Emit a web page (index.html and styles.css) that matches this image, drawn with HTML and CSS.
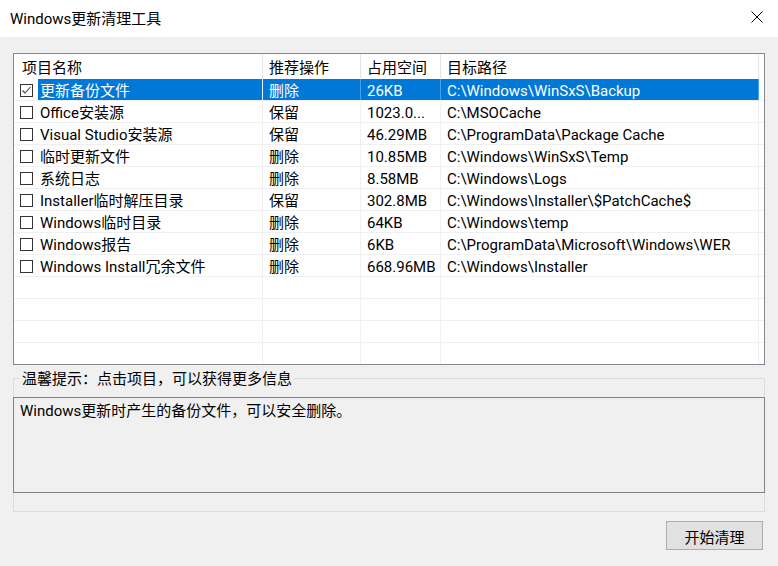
FILE: index.html
```html
<!DOCTYPE html>
<html lang="zh-CN">
<head>
    <meta charset="UTF-8">
    <title>Windows更新清理工具</title>
    <link rel="stylesheet" href="styles.css">
</head>
<body>
    <div class="titlebar">
        <span class="title">Windows更新清理工具</span>
        <svg class="close" width="12" height="12" viewBox="0 0 12 12"><path d="M0.5 0.5L11.5 11.5M11.5 0.5L0.5 11.5" stroke="#000" stroke-width="1" fill="none"/></svg>
    </div>
    <div class="client">
        <div class="listview">
            <div class="row head">
                <div class="cell c1">项目名称</div>
                <div class="cell c2">推荐操作</div>
                <div class="cell c3">占用空间</div>
                <div class="cell c4">目标路径</div>
            </div>
            <div class="row selected">
                <div class="cell c1"><span class="check on"><svg width="11" height="11" viewBox="0 0 11 11"><path d="M1.5 5.5L4 8L9.5 2" stroke="#444" stroke-width="1.1" fill="none"/></svg></span><span class="label">更新备份文件</span></div>
                <div class="cell c2">删除</div>
                <div class="cell c3">26KB</div>
                <div class="cell c4">C:\Windows\WinSxS\Backup</div>
            </div>
            <div class="row">
                <div class="cell c1"><span class="check"></span><span class="label">Office安装源</span></div>
                <div class="cell c2">保留</div>
                <div class="cell c3">1023.0...</div>
                <div class="cell c4">C:\MSOCache</div>
            </div>
            <div class="row">
                <div class="cell c1"><span class="check"></span><span class="label">Visual Studio安装源</span></div>
                <div class="cell c2">保留</div>
                <div class="cell c3">46.29MB</div>
                <div class="cell c4">C:\ProgramData\Package Cache</div>
            </div>
            <div class="row">
                <div class="cell c1"><span class="check"></span><span class="label">临时更新文件</span></div>
                <div class="cell c2">删除</div>
                <div class="cell c3">10.85MB</div>
                <div class="cell c4">C:\Windows\WinSxS\Temp</div>
            </div>
            <div class="row">
                <div class="cell c1"><span class="check"></span><span class="label">系统日志</span></div>
                <div class="cell c2">删除</div>
                <div class="cell c3">8.58MB</div>
                <div class="cell c4">C:\Windows\Logs</div>
            </div>
            <div class="row">
                <div class="cell c1"><span class="check"></span><span class="label">Installer临时解压目录</span></div>
                <div class="cell c2">保留</div>
                <div class="cell c3">302.8MB</div>
                <div class="cell c4">C:\Windows\Installer\$PatchCache$</div>
            </div>
            <div class="row">
                <div class="cell c1"><span class="check"></span><span class="label">Windows临时目录</span></div>
                <div class="cell c2">删除</div>
                <div class="cell c3">64KB</div>
                <div class="cell c4">C:\Windows\temp</div>
            </div>
            <div class="row">
                <div class="cell c1"><span class="check"></span><span class="label">Windows报告</span></div>
                <div class="cell c2">删除</div>
                <div class="cell c3">6KB</div>
                <div class="cell c4">C:\ProgramData\Microsoft\Windows\WER</div>
            </div>
            <div class="row">
                <div class="cell c1"><span class="check"></span><span class="label">Windows Install冗余文件</span></div>
                <div class="cell c2">删除</div>
                <div class="cell c3">668.96MB</div>
                <div class="cell c4">C:\Windows\Installer</div>
            </div>
            <div class="row empty"><div class="cell c1"></div><div class="cell c2"></div><div class="cell c3"></div><div class="cell c4"></div></div>
            <div class="row empty"><div class="cell c1"></div><div class="cell c2"></div><div class="cell c3"></div><div class="cell c4"></div></div>
            <div class="row empty"><div class="cell c1"></div><div class="cell c2"></div><div class="cell c3"></div><div class="cell c4"></div></div>
            <div class="row empty"><div class="cell c1"></div><div class="cell c2"></div><div class="cell c3"></div><div class="cell c4"></div></div>
        </div>
        <fieldset class="groupbox">
            <legend><span>温馨提示：点击项目，可以获得更多信息</span></legend>
            <div class="memo">Windows更新时产生的备份文件，可以安全删除。</div>
        </fieldset>
        <div class="footer">
            <button class="btn">开始清理</button>
        </div>
    </div>
</body>
</html>
```

FILE: styles.css
```css
html, body { margin: 0; height: 100%; }
body { background: #f0f0f0; font-family: Roboto, "Noto Sans CJK SC", sans-serif; font-size: 15px; color: #000; overflow: hidden; }

/* title bar */
.titlebar { height: 37px; background: #fff; display: flex; align-items: center; justify-content: space-between; padding: 0 15px 0 10px; box-sizing: border-box; }
.title { font-size: 15px; line-height: 20px; }
.close { margin-top: -3px; }

.client { padding: 16px 13px 0 13px; }

/* list view */
.listview { height: 312px; box-sizing: border-box; border: 1px solid #828790; background: #fff; overflow: hidden; }
.row { display: flex; height: 22px; border-bottom: 1px solid #f0f0f0; box-sizing: border-box; }
.row.head { height: 25px; border-bottom: none; }
.cell { height: 100%; box-sizing: border-box; display: flex; align-items: center; padding-left: 6px; padding-top: 2px; white-space: nowrap; overflow: hidden; border-right: 1px solid #f0f0f0; line-height: 20px; }
.head .cell { border-right-color: #e5e5e5; }
.head .c1 { padding-left: 8px; }
.c1 { width: 249px; }
.c2 { width: 98px; }
.c3 { width: 80px; }
.c4 { width: 318px; }
.row:not(.head) .c1 { padding-top: 0; }

.check { width: 13px; height: 13px; border: 1px solid #333; box-sizing: border-box; background: #fff; flex: none; display: flex; align-items: center; justify-content: center; margin-top: 1px; }
.label { padding-left: 7px; padding-top: 2px; box-sizing: border-box; height: 100%; display: flex; align-items: center; padding-right: 300px; }

.selected .c2, .selected .c3, .selected .c4 { background: #0078d7; color: #fff; border-right-color: #4aa0e6; }
.selected .label { background: #0078d7; color: #fff; margin-left: 5px; padding-left: 2px; }

/* hint group */
.groupbox { margin: 3px 0 0 0; padding: 0 0 18px 0; border: 1px solid #dcdcdc; min-width: 0; }
.groupbox legend { padding: 0 2px; margin-left: 6px; line-height: 20px; font-size: 15px; }
.groupbox legend span { position: relative; top: 1px; }
.memo { margin: 9px -1px 0 -1px; height: 96px; box-sizing: border-box; border: 1px solid #828282; padding: 3px 6px 0 6px; line-height: 20px; }

.footer { display: flex; justify-content: flex-end; padding: 9px 2px 0 0; }
.btn { width: 97px; height: 29px; background: #e1e1e1; border: 1px solid #adadad; font-family: inherit; font-size: 15px; color: #000; padding: 2px 0 0 0; }
```
